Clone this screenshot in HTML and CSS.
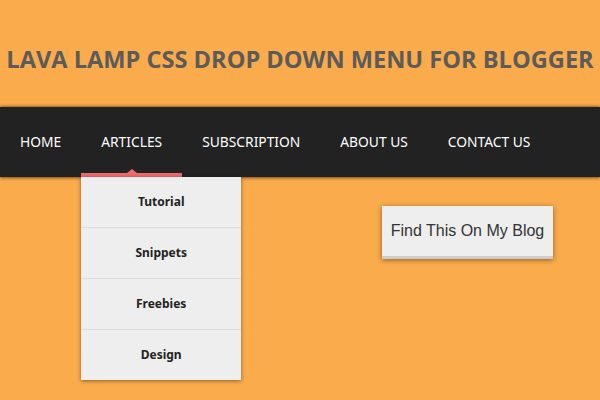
FILE: index.html
```html
<!DOCTYPE html>
<html lang="en">
<head>
  <meta charset="UTF-8">
  <meta name="viewport" content="width=device-width, initial-scale=1.0">
  <title>Lava Lamp Menu</title>
  <link rel="stylesheet" href="styles.css">
</head>
<body>
  <h1 class="title">LAVA LAMP CSS DROP DOWN MENU FOR BLOGGER</h1>

  <nav class="menu">
    <ul class="menu-list">
      <li class="menu-item"><a href="#">HOME</a></li>
      <li class="menu-item active">
        <a href="#">ARTICLES</a>
        <span class="lamp"></span>
        <ul class="submenu">
          <li><a href="#">Tutorial</a></li>
          <li><a href="#">Snippets</a></li>
          <li><a href="#">Freebies</a></li>
          <li><a href="#">Design</a></li>
        </ul>
      </li>
      <li class="menu-item"><a href="#">SUBSCRIPTION</a></li>
      <li class="menu-item"><a href="#">ABOUT US</a></li>
      <li class="menu-item"><a href="#">CONTACT US</a></li>
    </ul>
  </nav>

  <div class="content">
    <a class="blog-btn" href="#">Find This On My Blog</a>
  </div>
</body>
</html>
```

FILE: styles.css
```css
body {
  margin: 0;
  min-height: 100vh;
  background-color: #faab4b;
  font-family: "Open Sans", sans-serif;
}
.title {
  margin: 0;
  height: 107px;
  line-height: 118px;
  text-align: center;
  font-size: 23.6px;
  font-weight: bold;
  color: #5b5b5b;
}
.menu {
  height: 70px;
  background-color: #222;
  box-shadow: 0 1px 3px rgba(0, 0, 0, 0.5), 0 -1px 3px rgba(0, 0, 0, 0.3);
  position: relative;
  z-index: 2;
}
.menu-list {
  list-style: none;
  margin: 0;
  padding: 0;
  display: flex;
}
.menu-item {
  position: relative;
}
.menu-item > a {
  display: block;
  padding: 0 20px;
  line-height: 70px;
  color: #fff;
  text-decoration: none;
  font-family: "Noto Sans", sans-serif;
  font-size: 13.8px;
}
.lamp {
  position: absolute;
  left: 0;
  right: 0;
  bottom: 0;
  height: 4px;
  background-color: #f26b6b;
}
.lamp::before {
  content: "";
  position: absolute;
  left: 50%;
  top: -4px;
  margin-left: -5px;
  border-left: 5px solid transparent;
  border-right: 5px solid transparent;
  border-bottom: 4px solid #f26b6b;
}
.submenu {
  position: absolute;
  top: 70px;
  left: 0;
  width: 160px;
  margin: 0;
  padding: 0;
  list-style: none;
  background-color: #eee;
  box-shadow: 0 1px 4px rgba(0, 0, 0, 0.45);
}
.submenu li {
  border-top: 1px solid #dcdcdc;
}
.submenu li:first-child {
  border-top: none;
}
.submenu a {
  display: block;
  height: 50px;
  line-height: 50px;
  text-align: center;
  color: #222;
  text-decoration: none;
  font-family: "Noto Sans", sans-serif;
  font-size: 12px;
  font-weight: bold;
}
.content {
  padding: 29px 0 0 382px;
}
.blog-btn {
  display: inline-block;
  width: 171px;
  height: 50px;
  line-height: 50px;
  text-align: center;
  background-color: #eee;
  border-bottom: 3px solid #ccc;
  color: #333;
  text-decoration: none;
  font-family: "Liberation Sans", Arial, sans-serif;
  font-size: 16px;
  box-shadow: 0 1px 5px rgba(0, 0, 0, 0.45);
}
```
